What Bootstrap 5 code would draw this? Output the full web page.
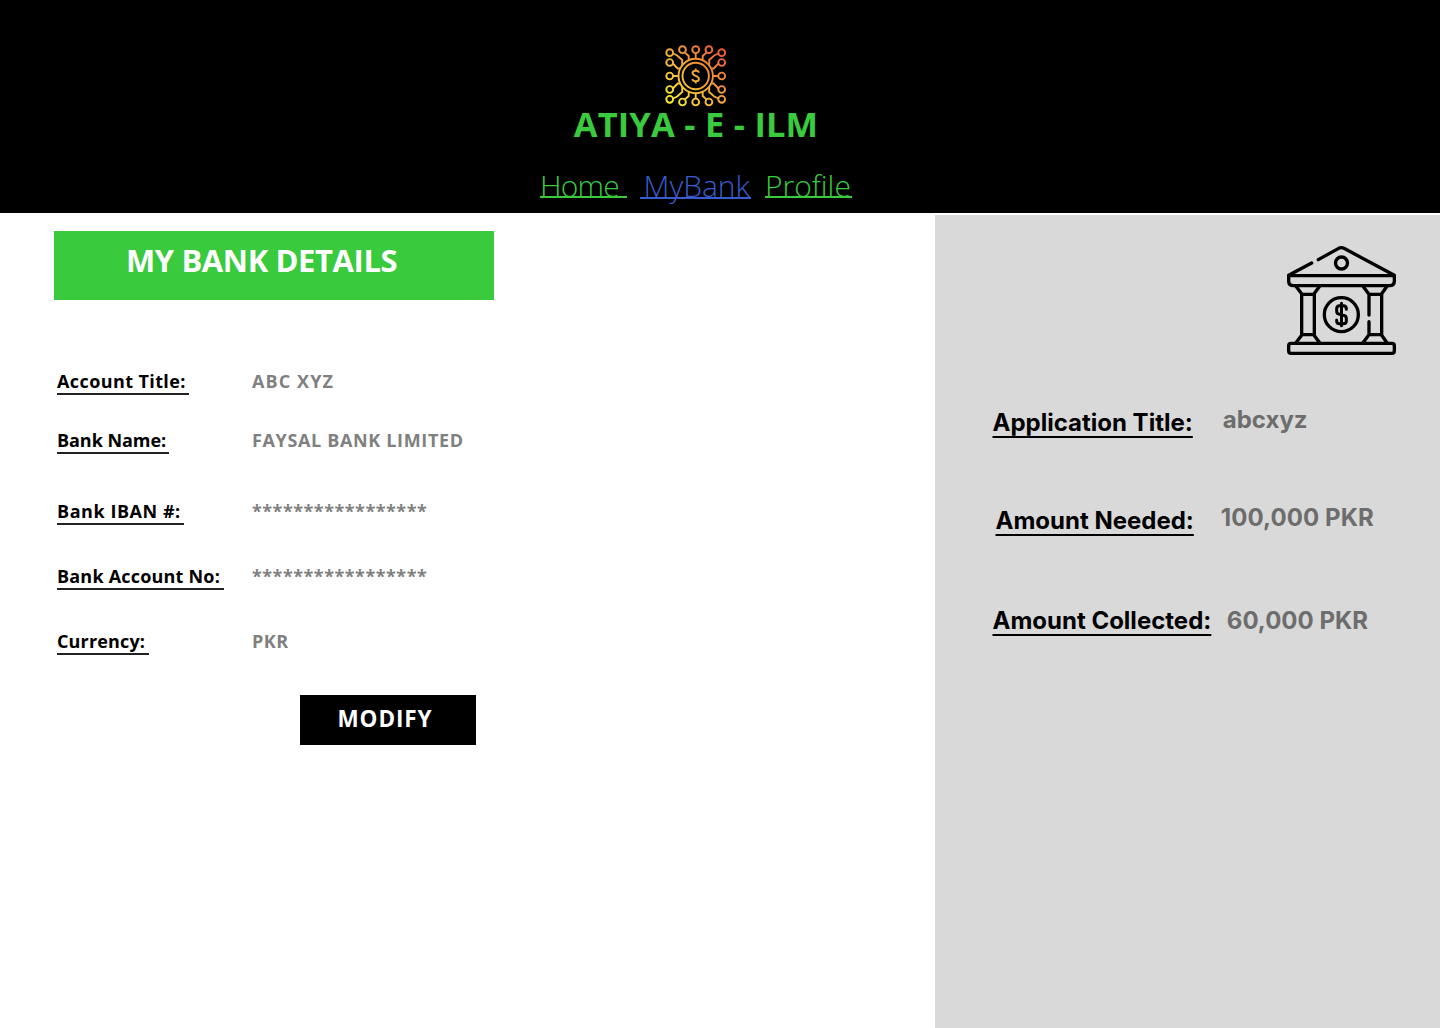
<!DOCTYPE html>
<html lang="en">
<head>
<meta charset="utf-8">
<meta name="viewport" content="width=device-width, initial-scale=1">
<title>Atiya-e-Ilm | My Bank</title>
<link href="https://cdn.jsdelivr.net/npm/bootstrap@5.3.0/dist/css/bootstrap.min.css" rel="stylesheet">
<style>
:root { --brand: #39ca3e; --link: #3a5bcb; }
body { font-family: "Open Sans", "Noto Sans", sans-serif; color: #000; background: #fff; height: 1028px; overflow: hidden; }
.site-head { height: 213px; background: #000; padding: 42px 49px 0 0; }
.site-logo { width: 68px; height: 68px; margin-bottom: -6px; flex: none; }
.site-name { font-size: 34.5px; font-weight: 700; line-height: 40px; letter-spacing: .1px; word-spacing: .4px; color: var(--brand); margin: 0; padding-left: 1px; white-space: pre; }
.site-nav { margin-top: 22px; padding-left: 1px; font-size: 30px; line-height: 40px; font-weight: 300; white-space: pre; }
.site-nav a { width: 87px; color: var(--brand); text-decoration: none; background: linear-gradient(currentColor, currentColor) 0 29px / 100% 2px no-repeat; background-position: 0 31px; }
.site-nav a { height: 40px; background-position: 0 30px; }
.site-nav a:first-child { letter-spacing: -.8px; }
.site-nav a.on { width: 111px; margin: 0 14px 0 13px; padding-left: 3.5px; color: var(--link); background-position: 0 31px; }
.page-body { height: 813px; margin-top: 2px; }
.bank-pane { width: 935px; padding: 16px 0 0 54px; }
.pane-title { width: 440px; height: 69px; background: var(--brand); color: #fff; font-size: 31px; font-weight: 700; line-height: 59px; letter-spacing: -.4px; padding-left: 72px; margin: 0 0 69px; white-space: nowrap; }
.field { height: 24px; line-height: 24px; font-size: 18px; font-weight: 700; padding-left: 3px; white-space: nowrap; }
.field dt { width: 195px; font-weight: 700; }
.field dt span { display: inline-block; height: 26px; border-bottom: 2px solid #222; }
.field dd { margin: 0; color: #808080; }
.f1 { margin-bottom: 35px; }
.f2 { margin-bottom: 47px; }
.f3, .f4 { margin-bottom: 41px; }
.f1 span { width: 132px; letter-spacing: .4px; }
.f2 span { width: 112px; letter-spacing: -.05px; }
.f3 span { width: 127px; letter-spacing: .55px; }
.f4 span { width: 167px; letter-spacing: .2px; }
.f5 span { width: 92px; letter-spacing: .15px; }
.f1 dd { letter-spacing: 1.1px; }
.f2 dd { letter-spacing: .65px; }
.f3 dd, .f4 dd { letter-spacing: .5px; }
.f5 dd { letter-spacing: .5px; }
.btn-modify { display: block; width: 176px; height: 50px; margin: 42px 0 0 246px; padding: 0 6px 0 0; border: 0; border-radius: 0; background: #000; color: #fff; font-size: 22.5px; font-weight: 700; line-height: 47px; letter-spacing: .9px; }
.btn-modify span { display: block; height: 50px; }
.app-pane { background: #d9d9d9; padding: 27px 0 0 57.5px; font-family: Inter, sans-serif; font-size: 24px; font-weight: 700; line-height: 30px; white-space: nowrap; }
.bank-icon { width: 130px; height: 130px; margin: -6px 35px 42px auto; display: block; }
.fact { height: 30px; margin-bottom: 68px; }
.fact u { text-decoration-thickness: 1.5px; text-decoration-skip-ink: none; text-underline-offset: 4.5px; }
.fact span { color: #6d6d6d; }
.lift { margin-top: -3px; }
.a1 span { margin-left: 30px; }
.a2 { padding-left: 3px; margin-bottom: 70px; }
.a2 span { margin-left: 27px; letter-spacing: .08px; }
.a3 span { margin-left: 15.5px; }
</style>
</head>
<body>
<header class="site-head d-flex flex-column align-items-center">
  <svg class="site-logo" viewBox="-33.7 -34 68 68" fill="none" stroke="url(#glow)" stroke-width="1.9">
    <defs><linearGradient id="glow" gradientUnits="userSpaceOnUse" x1="-26" y1="26" x2="26" y2="-26"><stop offset="0" stop-color="#f9ed32"/><stop offset=".5" stop-color="#f3a83a"/><stop offset="1" stop-color="#ee5a3a"/></linearGradient></defs>
    <circle r="17.2"/><circle r="13.2"/>
    <circle cx="-26" cy="-23.3" r="3.4"/><circle cx="-13.2" cy="-26.3" r="3.4"/><circle cx="0" cy="-26.3" r="3.4"/><circle cx="13.2" cy="-26.3" r="3.4"/><circle cx="26" cy="-23.3" r="3.4"/>
    <circle cx="-26" cy="-13.5" r="3.4"/><circle cx="26" cy="-13.5" r="3.4"/>
    <circle cx="-26" cy="0" r="3.4"/><circle cx="26" cy="0" r="3.4"/>
    <circle cx="-26" cy="13.5" r="3.4"/><circle cx="26" cy="13.5" r="3.4"/>
    <circle cx="-26" cy="23.3" r="3.4"/><circle cx="-13.2" cy="26" r="3.4"/><circle cx="0" cy="26" r="3.4"/><circle cx="13.2" cy="26" r="3.4"/><circle cx="26" cy="23.3" r="3.4"/>
    <path d="M-22.7-22.5-18.5-20.5-13.5-16V-11M-11-23.6-7-20V-16M0-23 .01-17M11-23.6 7-20V-16M22.7-22.5 18.5-20.5 13.5-16V-11M-22.8-12.5-18-7.5H-15.6M22.8-12.5 18-7.5H15.6"/>
    <path d="M-22.7 22.5-18.5 20.5-13.5 16V11M-11 23.6-7 20V16M0 23 .01 17M11 23.6 7 20V16M22.7 22.5 18.5 20.5 13.5 16V11M-22.8 12.5-18 7.5H-15.6M22.8 12.5 18 7.5H15.6M-22.7 0H-17.2M22.7 0H17.2"/>
    <path d="M3.2-3.2C3-6-3.2-6-3.2-2.9-3.2.2 3.2-.4 3.2 2.9 3.2 6-3.2 6-3.2 3M0-7.6V-5M.01 5V7.6"/>
  </svg>
  <h1 class="site-name">ATIYA - E - ILM</h1>
  <nav class="site-nav d-flex"><a href="#">Home </a><a href="#" class="on">MyBank</a><a href="#">Profile</a></nav>
</header>
<main class="page-body d-flex">
  <section class="bank-pane flex-shrink-0">
    <h2 class="pane-title">MY BANK DETAILS</h2>
    <dl class="m-0">
      <div class="field d-flex f1"><dt><span>Account Title:</span></dt><dd>ABC XYZ</dd></div>
      <div class="field d-flex f2"><dt><span>Bank Name:</span></dt><dd>FAYSAL BANK LIMITED</dd></div>
      <div class="field d-flex f3"><dt><span>Bank IBAN #:</span></dt><dd>*****************</dd></div>
      <div class="field d-flex f4"><dt><span>Bank Account No:</span></dt><dd>*****************</dd></div>
      <div class="field d-flex f5"><dt><span>Currency:</span></dt><dd>PKR</dd></div>
    </dl>
    <button class="btn btn-modify" type="button"><span>MODIFY</span></button>
  </section>
  <aside class="app-pane flex-grow-1">
    <svg class="bank-icon" viewBox="0 0 390 390" fill="none" stroke="#000" stroke-width="10" stroke-linecap="round" stroke-linejoin="round">
      <path d="M110 81 41 118V135Q41 149 55 149H344Q358 149 358 135V118L207 37Q199 33 191 37L130 71M41 119H358"/>
      <circle cx="199.500" cy="81" r="18"/><circle cx="199" cy="236" r="51"/>
      <path d="M63 151 81 175H116L134 151M80 175V296M118 175V296M63 320 81 296H116L134 320M264 151 282 175H319L336 151M282 175V237M282 257V296M320 175V296M264 320 282 296H319L336 320"/>
      <rect x="41" y="322" width="317" height="30" rx="7"/>
      <path d="M214 220V218Q214 209 205 209H194Q185 209 185 218V225Q185 234 194 235L205 238Q214 239 214 248V254Q214 263 205 263H194Q185 263 185 254V252M199.500 202V269" stroke-width="9"/>
    </svg>
    <div class="fact d-flex a1"><u>Application Title:</u><span class="lift">abcxyz</span></div>
    <div class="fact d-flex a2"><u>Amount Needed:</u><span class="lift">100,000 PKR</span></div>
    <div class="fact d-flex a3"><u>Amount Collected:</u><span>60,000 PKR</span></div>
  </aside>
</main>
<script src="https://cdn.jsdelivr.net/npm/bootstrap@5.3.0/dist/js/bootstrap.bundle.min.js"></script>
</body>
</html>
